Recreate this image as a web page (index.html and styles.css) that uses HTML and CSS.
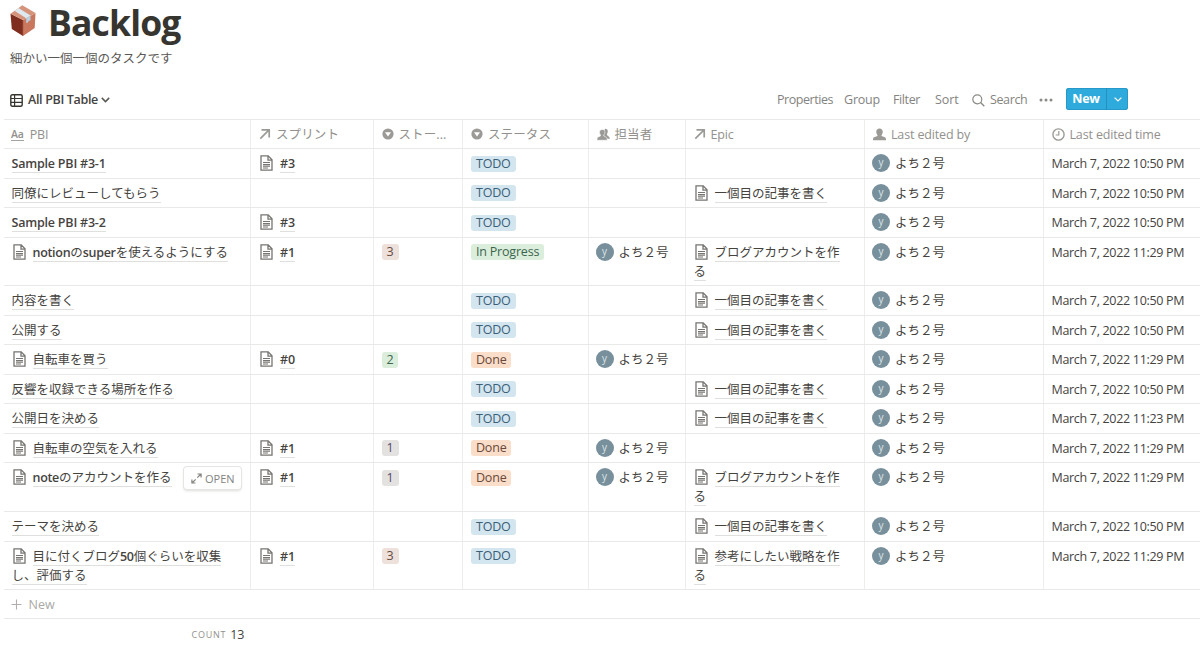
FILE: index.html
```html
<!DOCTYPE html>
<html lang="ja">
<head>
<meta charset="utf-8">
<title>Backlog</title>
<link rel="stylesheet" href="styles.css">
</head>
<body>
<svg class="defs" width="0" height="0">
  <symbol id="page" viewBox="0 0 13 16"><path d="M1 .8h7.2L12 4.8v10.4H1zM8 .8v4.4h4" fill="none" stroke="#777571" stroke-width="1.3"/><path d="M3 7.5h7M3 9.6h7M3 11.3h7M3 13h5" stroke="#777571" stroke-width="1.1"/></symbol>
  <symbol id="arrow" viewBox="0 0 12 12"><path d="M1.300 10.700 9.800 2.200M2.500 1.800h7.700v7.700" fill="none" stroke="#9b9a97" stroke-width="1.700"/></symbol>
  <symbol id="select" viewBox="0 0 12 12"><circle cx="6" cy="6" r="5.6" fill="#9b9a97"/><path d="M3 4.3h6L6 8.6z" fill="#fff"/></symbol>
  <symbol id="person" viewBox="0 0 14 14"><path d="M7 .5c2.200 0 3.500 1.500 3.500 3.600 0 1.500-.6 2.700-1.300 3.500v.9l3.600 1.500c.9.400 1.200 1.200 1.200 3.200H0c0-2 .3-2.800 1.200-3.200l3.600-1.500v-.9C4.100 6.800 3.500 5.600 3.500 4.100 3.500 2 4.800.5 7 .5z" fill="#9b9a97"/></symbol>
  <symbol id="people" viewBox="0 0 14 14"><path d="M8.800.9c2 0 2.900 1.200 2.800 3-.1 1.200-.5 2-.9 2.500v1.200l2.100 1.800c.8.700.9 1.200.9 2.100H8.500L6.500 5z" fill="#9b9a97"/><path d="M5.600 1.600c1.900 0 2.900 1.200 2.900 2.900 0 1.400-.5 2.400-1.200 3.100v.9l2.500 1.300c.8.400 1.200 1.500 1.200 3.400H0c0-1.900.4-3 1.200-3.400l2.600-1.300v-.9C3.100 6.900 2.700 5.900 2.700 4.500c0-1.700 1-2.900 2.900-2.900z" fill="#9b9a97" stroke="#fff" stroke-width=".6"/></symbol>
</svg>
<main class="page">
  <header class="title">
    <svg class="box" viewBox="0 0 26 32" width="26" height="32"><path d="M.5 8.700 13 15v16L1.800 24z" fill="#7f2d1e"/><path d="M13 15 25.500 8l-.8 15L13 31z" fill="#c9775d"/><path d="M.5 8.700 12.300.2 25.500 8 13 15z" fill="#d5937b"/><path d="m4.500 5.800 4-2.900L20.500 10.600l-4.300 2.600z" fill="#dde8ef"/><path d="m16.200 13.200 4.300-2.600v5.200l-1.500-.3-1.400 2.200-1.400.2z" fill="#b9cfdf"/><path d="m13 15.500-.1 15" stroke="#aa5640" stroke-width=".7"/></svg>
    <h1>Backlog</h1>
  </header>
  <p class="desc">細かい一個一個のタスクです</p>
  <div class="bar">
    <div class="view">
      <svg width="13" height="13" viewBox="0 0 13 13"><rect x=".8" y=".8" width="11.400" height="11.400" rx="1.500" fill="none" stroke="#37352f" stroke-width="1.400"/><path d="M1 4.500h11M1 8.300h11M4.600 1v11" stroke="#37352f" stroke-width="1.200"/></svg>
      <span>All PBI Table</span>
      <svg class="chev" width="9" height="6" viewBox="0 0 9 6"><path d="m.8.900 3.700 3.700L8.200.900" fill="none" stroke="#5a5854" stroke-width="1.500"/></svg>
    </div>
    <nav class="tools">
      <span class="t1">Properties</span><span class="t2">Group</span><span class="t3">Filter</span><span class="t4">Sort</span>
      <svg class="mag" width="13" height="13" viewBox="0 0 13 13"><circle cx="5.300" cy="5.300" r="4.500" fill="none" stroke="#8b8a86" stroke-width="1.200"/><path d="m8.600 8.600 3.700 3.700" stroke="#8b8a86" stroke-width="1.400"/></svg>
      <span class="t5">Search</span>
      <svg class="dots" width="14" height="4" viewBox="0 0 14 4"><g fill="#8b8a86"><circle cx="2" cy="2" r="1.500"/><circle cx="7" cy="2" r="1.500"/><circle cx="12" cy="2" r="1.500"/></g></svg>
      <div class="new"><b>New</b><i><svg width="8" height="5" viewBox="0 0 8 5"><path d="m.6.600 3.400 3.300L7.400.600" fill="none" stroke="#fff" stroke-width="1.300"/></svg></i></div>
    </nav>
  </div>
  <section class="table">
    <div class="row head">
      <div><span class="aa">Aa</span><span>PBI</span></div>
      <div><svg class="ic arrow"><use href="#arrow"/></svg><span class="jp">スプリント</span></div>
      <div><svg class="ic sel"><use href="#select"/></svg><span class="jp">ストー...</span></div>
      <div><svg class="ic sel"><use href="#select"/></svg><span class="jp">ステータス</span></div>
      <div><svg class="ic per"><use href="#people"/></svg><span class="jp">担当者</span></div>
      <div><svg class="ic arrow"><use href="#arrow"/></svg><span>Epic</span></div>
      <div><svg class="ic per"><use href="#person"/></svg><span>Last edited by</span></div>
      <div><svg class="ic per" viewBox="0 0 13 13"><circle cx="6.500" cy="6.500" r="5.600" fill="none" stroke="#9b9a97" stroke-width="1.400"/><path d="M6.800 3v4H3.700" fill="none" stroke="#9b9a97" stroke-width="1.200"/></svg><span>Last edited time</span></div>
    </div>
    <div class="row"><div class="name"><u class="en">Sample PBI #3-1</u></div><div><svg class="doc"><use href="#page"/></svg><u class="num">#3</u></div><div></div><div><span class="tag blue">TODO</span></div><div></div><div></div><div class="user"><i>y</i>よち２号</div><div class="date">March 7, 2022 10:50 PM</div></div>
    <div class="row"><div class="name"><u>同僚にレビューしてもらう</u></div><div></div><div></div><div><span class="tag blue">TODO</span></div><div></div><div><svg class="doc"><use href="#page"/></svg><u>一個目の記事を書く</u></div><div class="user"><i>y</i>よち２号</div><div class="date">March 7, 2022 10:50 PM</div></div>
    <div class="row"><div class="name"><u class="en">Sample PBI #3-2</u></div><div><svg class="doc"><use href="#page"/></svg><u class="num">#3</u></div><div></div><div><span class="tag blue">TODO</span></div><div></div><div></div><div class="user"><i>y</i>よち２号</div><div class="date">March 7, 2022 10:50 PM</div></div>
    <div class="row tall"><div class="name"><svg class="doc"><use href="#page"/></svg><u><b>notion</b>の<b>super</b>を使えるようにする</u></div><div><svg class="doc"><use href="#page"/></svg><u class="num">#1</u></div><div><span class="tag brown">3</span></div><div><span class="tag green">In Progress</span></div><div class="user"><i>y</i>よち２号</div><div><svg class="doc"><use href="#page"/></svg><u>ブログアカウントを作<br>る</u></div><div class="user"><i>y</i>よち２号</div><div class="date">March 7, 2022 11:29 PM</div></div>
    <div class="row"><div class="name"><u>内容を書く</u></div><div></div><div></div><div><span class="tag blue">TODO</span></div><div></div><div><svg class="doc"><use href="#page"/></svg><u>一個目の記事を書く</u></div><div class="user"><i>y</i>よち２号</div><div class="date">March 7, 2022 10:50 PM</div></div>
    <div class="row"><div class="name"><u>公開する</u></div><div></div><div></div><div><span class="tag blue">TODO</span></div><div></div><div><svg class="doc"><use href="#page"/></svg><u>一個目の記事を書く</u></div><div class="user"><i>y</i>よち２号</div><div class="date">March 7, 2022 10:50 PM</div></div>
    <div class="row"><div class="name"><svg class="doc"><use href="#page"/></svg><u>自転車を買う</u></div><div><svg class="doc"><use href="#page"/></svg><u class="num">#0</u></div><div><span class="tag green">2</span></div><div><span class="tag orange">Done</span></div><div class="user"><i>y</i>よち２号</div><div></div><div class="user"><i>y</i>よち２号</div><div class="date">March 7, 2022 11:29 PM</div></div>
    <div class="row"><div class="name"><u>反響を収録できる場所を作る</u></div><div></div><div></div><div><span class="tag blue">TODO</span></div><div></div><div><svg class="doc"><use href="#page"/></svg><u>一個目の記事を書く</u></div><div class="user"><i>y</i>よち２号</div><div class="date">March 7, 2022 10:50 PM</div></div>
    <div class="row"><div class="name"><u>公開日を決める</u></div><div></div><div></div><div><span class="tag blue">TODO</span></div><div></div><div><svg class="doc"><use href="#page"/></svg><u>一個目の記事を書く</u></div><div class="user"><i>y</i>よち２号</div><div class="date">March 7, 2022 11:23 PM</div></div>
    <div class="row"><div class="name"><svg class="doc"><use href="#page"/></svg><u>自転車の空気を入れる</u></div><div><svg class="doc"><use href="#page"/></svg><u class="num">#1</u></div><div><span class="tag gray">1</span></div><div><span class="tag orange">Done</span></div><div class="user"><i>y</i>よち２号</div><div></div><div class="user"><i>y</i>よち２号</div><div class="date">March 7, 2022 11:29 PM</div></div>
    <div class="row tall"><div class="name"><svg class="doc"><use href="#page"/></svg><u><b>note</b>のアカウントを作る</u><span class="open"><svg width="11" height="11" viewBox="0 0 11 11"><path d="M6.500 1h3.600v3.600M10 1 6.300 4.700M4.500 10H.9V6.400M1 10l3.700-3.700" fill="none" stroke="#84837f" stroke-width="1.200"/></svg><span>OPEN</span></span></div><div><svg class="doc"><use href="#page"/></svg><u class="num">#1</u></div><div><span class="tag gray">1</span></div><div><span class="tag orange">Done</span></div><div class="user"><i>y</i>よち２号</div><div><svg class="doc"><use href="#page"/></svg><u>ブログアカウントを作<br>る</u></div><div class="user"><i>y</i>よち２号</div><div class="date">March 7, 2022 11:29 PM</div></div>
    <div class="row"><div class="name"><u>テーマを決める</u></div><div></div><div></div><div><span class="tag blue">TODO</span></div><div></div><div><svg class="doc"><use href="#page"/></svg><u>一個目の記事を書く</u></div><div class="user"><i>y</i>よち２号</div><div class="date">March 7, 2022 10:50 PM</div></div>
    <div class="row tall"><div class="name"><svg class="doc"><use href="#page"/></svg><u>目に付くブログ<b>50</b>個ぐらいを収集<br>し、評価する</u></div><div><svg class="doc"><use href="#page"/></svg><u class="num">#1</u></div><div><span class="tag brown">3</span></div><div><span class="tag blue">TODO</span></div><div></div><div><svg class="doc"><use href="#page"/></svg><u>参考にしたい戦略を作<br>る</u></div><div class="user"><i>y</i>よち２号</div><div class="date">March 7, 2022 11:29 PM</div></div>
    <div class="add"><svg width="11" height="11" viewBox="0 0 11 11"><path d="M5.500.5v10M.5 5.500h10" stroke="#b0afac" stroke-width="1.100"/></svg><span>New</span></div>
    <div class="count"><span>COUNT</span><em>13</em></div>
  </section>
</main>
</body>
</html>
```
FILE: styles.css
```css
* { box-sizing: border-box; }
body { margin: 0; background: #fff; color: #45433e; font-family: "Open Sans", "Noto Sans CJK JP", sans-serif; font-size: 12.5px; line-height: 19px; overflow: hidden; }
.defs { position: absolute; }
.page { width: 1200px; height: 655px; overflow: hidden; }
.title { display: flex; height: 48px; padding-left: 10px; }
.box { margin-top: 5px; }
h1 { margin: 0 0 0 12px; color: #37352f; font-size: 35.5px; line-height: 45px; font-weight: 700; letter-spacing: -.85px; }
.desc { margin: 0; padding-left: 10px; height: 41px; line-height: 20px; font-family: "Noto Sans CJK JP", sans-serif; font-weight: 400; color: #5a5854; }
.bar { display: flex; justify-content: space-between; height: 30.4px; line-height: 22px; }
.view { display: flex; align-items: center; height: 22px; padding-left: 10px; font-weight: 600; letter-spacing: -.33px; }
.view span { margin-left: 5px; }
.chev { margin-left: 3px; }
.tools { display: flex; align-items: center; height: 22px; width: 423px; color: #84837f; letter-spacing: -.38px; white-space: nowrap; }
.t1 { width: 67px; letter-spacing: -.45px; }
.t2 { width: 49px; letter-spacing: -.2px; }
.t3 { width: 42px; }
.t4 { width: 37px; letter-spacing: -.1px; }
.mag { margin-right: 5px; }
.t5 { width: 49px; }
.dots { margin-right: 13px; }
.new { display: flex; width: 62px; height: 22px; border-radius: 3px; background: #2eaadc; color: #fff; box-shadow: inset 0 0 0 1px #2799c8; line-height: 21px; position: relative; top: -1px; }
.new b { width: 41px; text-align: center; border-right: 1px solid #2490bd; letter-spacing: -.2px; }
.new i { display: flex; flex: 1; align-items: center; justify-content: center; }
.table { margin-left: 4px; border-top: 1px solid #e9e9e7; }
.row { display: grid; grid-template-columns: 247px 122.500px 89.500px 125.500px 97px 179.500px 178.500px 156.500px; height: 29.500px; border-bottom: 1px solid #e9e9e7; }
.row > div { padding: 5px 0 0 8px; border-right: 1px solid #ededeb; white-space: nowrap; font-weight: 400; position: relative; }
.row > div:last-child { border-right: 0; }
.tall { height: 48.600px; }
.row.head { height: 29px; color: #92918d; }
.row.head > div { display: flex; align-items: center; padding: 0 0 0 8px; letter-spacing: -.15px; }
.row.head .jp { letter-spacing: .1px; }
.aa { font-size: 10.500px; font-weight: 600; line-height: 12px; border-bottom: 1px solid #a5a4a1; margin: 0 6px 0 -1px; }
.ic { flex: none; }
.arrow { width: 12px; height: 12px; margin-right: 5px; }
.sel { width: 12px; height: 12px; margin-right: 5px; }
.per { width: 13px; height: 13px; margin-right: 5px; }
.row .name { padding-left: 7.5px; }
u { text-decoration: none; border-bottom: 1px solid #dfdfdd; }
u b, .num, .en { font-weight: 600; }
.en { letter-spacing: -.2px; }
u b { letter-spacing: -.3px; }
.doc { width: 13px; height: 16px; margin: 0 7px 0 1px; vertical-align: -3px; }
.tag { display: inline-block; height: 16px; line-height: 16px; padding: 0 5px; border-radius: 3px; vertical-align: top; margin-top: 1.5px; letter-spacing: -.2px; }
.blue { background: #d3e5ef; color: #3b6076; }
.green { background: #dbeddb; color: #3b654e; }
.orange { background: #fadec9; color: #6b483a; }
.brown { background: #eee0da; color: #654b43; letter-spacing: 0; }
.gray { background: #e3e2e0; color: #5a466a; letter-spacing: 0; }
.user i { display: inline-block; width: 18px; height: 18px; margin: 0 5px 0 -1px; border-radius: 50%; background: #78909c; color: #dce4e8; font: 400 10px/17px "Open Sans", sans-serif; text-align: center; vertical-align: top; }
.row .date { letter-spacing: -.31px; }
.open { position: absolute; right: 9px; top: 4px; display: flex; align-items: center; width: 57px; height: 22px; padding-left: 7px; border-radius: 3px; background: #fff; box-shadow: 0 0 0 1px #e5e5e3, 0 2px 3px #dedddb; color: #84837f; font-size: 11px; }
.open span { margin-left: 3px; }
.add { display: flex; align-items: center; height: 29px; padding-left: 7px; border-bottom: 1px solid #e9e9e7; color: #aaa9a6; }
.add span { margin-left: 6.5px; }
.count { display: flex; align-items: center; justify-content: flex-end; width: 240px; height: 31px; }
.count span { font-size: 9px; letter-spacing: .75px; color: #92918d; }
.count em { margin-left: 4px; font-style: normal; letter-spacing: -.3px; }
```
